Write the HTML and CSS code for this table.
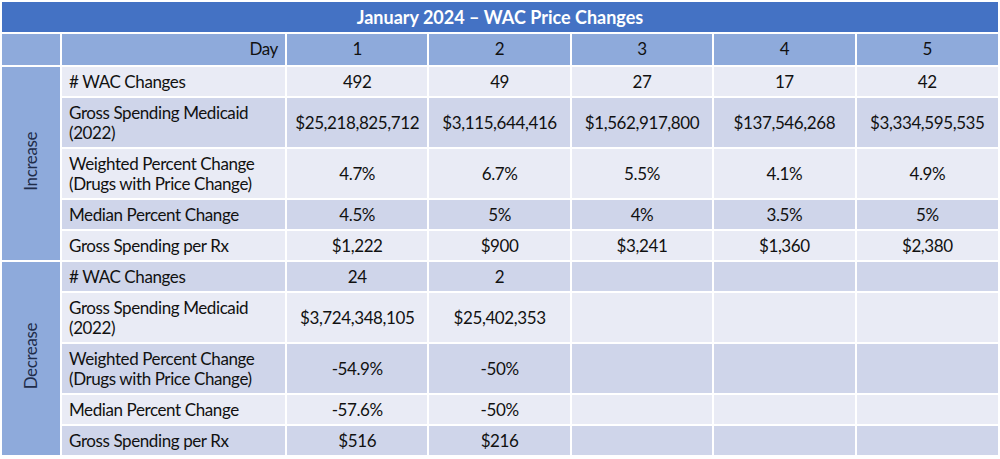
FILE: index.html
```html
<!DOCTYPE html>
<html>
<head>
<meta charset="utf-8">
<link rel="stylesheet" href="styles.css">
</head>
<body>
<table class="wac">
  <colgroup>
    <col class="c-sec"><col class="c-label"><col class="c-d"><col class="c-d"><col class="c-d"><col class="c-d"><col class="c-d">
  </colgroup>
  <tr class="title"><td colspan="7">January 2024 – WAC Price Changes</td></tr>
  <tr class="head">
    <td class="sec"></td><td class="day">Day</td><td>1</td><td>2</td><td>3</td><td>4</td><td>5</td>
  </tr>
  <tr class="lt">
    <td class="sec" rowspan="5"><span class="vert">Increase</span></td>
    <td class="label"># WAC Changes</td><td>492</td><td>49</td><td>27</td><td>17</td><td>42</td>
  </tr>
  <tr class="dk">
    <td class="label">Gross Spending Medicaid<br>(2022)</td><td>$25,218,825,712</td><td>$3,115,644,416</td><td>$1,562,917,800</td><td>$137,546,268</td><td>$3,334,595,535</td>
  </tr>
  <tr class="lt">
    <td class="label">Weighted Percent Change<br>(Drugs with Price Change)</td><td>4.7%</td><td>6.7%</td><td>5.5%</td><td>4.1%</td><td>4.9%</td>
  </tr>
  <tr class="dk">
    <td class="label">Median Percent Change</td><td>4.5%</td><td>5%</td><td>4%</td><td>3.5%</td><td>5%</td>
  </tr>
  <tr class="lt">
    <td class="label">Gross Spending per Rx</td><td>$1,222</td><td>$900</td><td>$3,241</td><td>$1,360</td><td>$2,380</td>
  </tr>
  <tr class="dk split">
    <td class="sec" rowspan="5"><span class="vert">Decrease</span></td>
    <td class="label"># WAC Changes</td><td>24</td><td>2</td><td></td><td></td><td></td>
  </tr>
  <tr class="lt">
    <td class="label">Gross Spending Medicaid<br>(2022)</td><td>$3,724,348,105</td><td>$25,402,353</td><td></td><td></td><td></td>
  </tr>
  <tr class="dk">
    <td class="label">Weighted Percent Change<br>(Drugs with Price Change)</td><td>-54.9%</td><td>-50%</td><td></td><td></td><td></td>
  </tr>
  <tr class="lt">
    <td class="label">Median Percent Change</td><td>-57.6%</td><td>-50%</td><td></td><td></td><td></td>
  </tr>
  <tr class="dk">
    <td class="label">Gross Spending per Rx</td><td>$516</td><td>$216</td><td></td><td></td><td></td>
  </tr>
</table>
</body>
</html>
```
FILE: styles.css
```css
html, body {
  margin: 0;
  padding: 0;
  background: #ffffff;
}
body {
  padding: 2px 0 0 2px;
  font-family: "Lato", "Open Sans", sans-serif;
  font-size: 17px;
  letter-spacing: -0.4px;
  color: #111;
}
.wac {
  width: 996px;
  border-collapse: collapse;
  table-layout: fixed;
}
.c-sec { width: 59px; }
.c-label { width: 225px; }
.c-d { width: 142.4px; }
.wac td {
  border: 2px solid #ffffff;
  padding: 5px 7px 4px;
  line-height: 20px;
  text-align: center;
  vertical-align: middle;
}
.wac tr:first-child td { border-top: 0; }
.wac td:first-child { border-left: 0; }
.wac td:last-child { border-right: 0; }
.title td {
  background: #4472c4;
  color: #ffffff;
  font-weight: bold;
  font-size: 18px;
  letter-spacing: 0;
  padding: 5px 8px;
  height: 20px;
}
.head td {
  background: #8eaadb;
  padding: 5px 7px 6px;
}
.head td.day { text-align: right; }
.wac td.sec {
  background: #8eaadb;
  padding: 0;
}
.vert {
  display: inline-block;
  writing-mode: vertical-rl;
  transform: rotate(180deg);
  color: #1f2d4a;
  line-height: 20px;
}
.lt td { background: #e9ebf5; }
.dk td { background: #cfd5ea; }
.wac td.label { text-align: left; }
.split td { border-top: 2px solid #1c1c1c; }
```
